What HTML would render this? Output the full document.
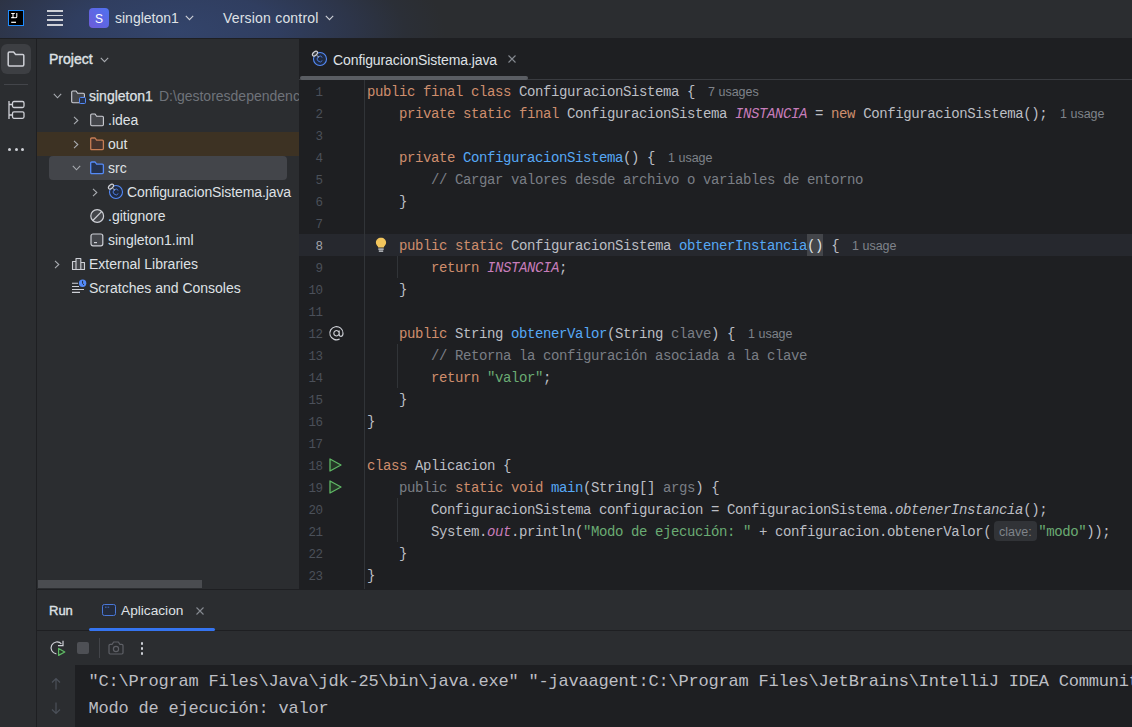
<!DOCTYPE html>
<html><head><meta charset="utf-8">
<style>
*{margin:0;padding:0;box-sizing:border-box}
html,body{width:1132px;height:727px;overflow:hidden;background:#1e1f22}
body{position:relative;font-family:"Liberation Sans",sans-serif;color:#dfe1e5}
.a{position:absolute}
svg{position:absolute;overflow:visible}
/* header */
#hdr{left:0;top:0;width:1132px;height:38px;background:#2b2d30;overflow:hidden}
#hdrgrad{left:0;top:0;width:1132px;height:38px;background:radial-gradient(ellipse 270px 110px at 175px 32px,#33446b 0%,#303e60 38%,#2d3549 66%,#2b2f37 85%,#2b2d30 100%)}
.ui{font-size:14px;white-space:pre;line-height:16px}
/* left strip */
#strip{left:0;top:39px;width:36px;height:688px;background:#2b2d30}
#stripb{left:36px;top:39px;width:1px;height:688px;background:#1e1f22}
#proj{left:37px;top:39px;width:262px;height:551px;background:#2b2d30;overflow:hidden}
#editor{left:299px;top:39px;width:833px;height:551px;background:#1e1f22;overflow:hidden}
.code{font-family:"Liberation Mono",monospace;font-size:14px;letter-spacing:-0.4px;line-height:22px;white-space:pre;color:#bcbec4}
.kw{color:#cf8e6d}
.fn{color:#56a8f5}
.st{color:#c77dbb;font-style:italic}
.str{color:#6aab73}
.cm{color:#7a7e85}
.gr{color:#7a7e85}
.it{font-style:italic}
.hint{font-family:"Liberation Sans",sans-serif;font-size:12.5px;color:#7f838a;letter-spacing:0}
.ln{font-family:"Liberation Mono",monospace;font-size:12.5px;color:#4b5059;text-align:right;width:40px;line-height:22px;letter-spacing:-0.5px}
#run{left:37px;top:590px;width:1095px;height:137px;background:#2b2d30}
.con{font-family:"Liberation Mono",monospace;font-size:17px;letter-spacing:-0.2px;line-height:26px;white-space:pre;color:#bcbec4}
</style></head><body>

<!-- HEADER -->
<div id="hdr" class="a">
  <div id="hdrgrad" class="a"></div>
  <!-- IJ logo -->
  <div class="a" style="left:8px;top:10px;width:16px;height:16px;background:#000;border:1.2px solid #1e8cff"></div>
  <svg style="left:0;top:0" width="30" height="30"><path d="M11.2 13.4 L14.8 13.4 M13 13.4 L13 17.6 M11.2 17.6 L14.8 17.6 M16.8 13 L16.8 16.8 Q16.8 17.6 16 17.6 L15.2 17.6" fill="none" stroke="#fff" stroke-width="1.05"/><path d="M11.2 22.3 L16 22.3" stroke="#fff" stroke-width="1.2"/></svg>
  <!-- hamburger -->
  <div class="a" style="left:47px;top:10.2px;width:16px;height:1.6px;background:#ced0d6"></div>
  <div class="a" style="left:47px;top:14.8px;width:16px;height:1.6px;background:#ced0d6"></div>
  <div class="a" style="left:47px;top:19.4px;width:16px;height:1.6px;background:#ced0d6"></div>
  <div class="a" style="left:47px;top:24px;width:16px;height:1.6px;background:#ced0d6"></div>
  <!-- project badge -->
  <div class="a" style="left:89px;top:8px;width:20px;height:20px;border-radius:4px;background:linear-gradient(45deg,#6d5bd8,#4f72f0)"></div>
  <div class="a ui" style="left:89px;top:10.5px;width:20px;text-align:center;color:#fff;font-size:12px">S</div>
  <div class="a ui" style="left:115px;top:10px;color:#dfe1e5;font-size:14px">singleton1</div>
  <svg style="left:185px;top:15px" width="9" height="6"><path d="M0.8 0.8 L4.5 4.6 L8.2 0.8" fill="none" stroke="#ced0d6" stroke-width="1.1"/></svg>
  <div class="a ui" style="left:223px;top:10px;color:#dfe1e5;font-size:14px;letter-spacing:0.2px">Version control</div>
  <svg style="left:325px;top:15px" width="9" height="6"><path d="M0.8 0.8 L4.5 4.6 L8.2 0.8" fill="none" stroke="#ced0d6" stroke-width="1.1"/></svg>
</div>
<div class="a" style="left:0;top:38px;width:1132px;height:1px;background:#1e1f22"></div>

<!-- LEFT STRIP -->
<div id="strip" class="a"></div>
<div id="stripb" class="a"></div>
<div class="a" style="left:1px;top:44px;width:30px;height:30px;border-radius:6px;background:#3d3f43"></div>
<svg style="left:7px;top:51px" width="18" height="16"><path d="M1.2 2.2 Q1.2 1 2.4 1 L6.6 1 L8.6 3.4 L15.6 3.4 Q16.8 3.4 16.8 4.6 L16.8 13.8 Q16.8 15 15.6 15 L2.4 15 Q1.2 15 1.2 13.8 Z" fill="none" stroke="#ced0d6" stroke-width="1.5" stroke-linejoin="round"/></svg>
<div class="a" style="left:4px;top:84px;width:24px;height:1px;background:#43454a"></div>
<svg style="left:8px;top:100px" width="17" height="20"><path d="M1 1 L1 19 M1 4.5 L4 4.5 M1 15 L4 15" fill="none" stroke="#ced0d6" stroke-width="1.3"/><rect x="4.5" y="1.5" width="11.5" height="6" rx="1.5" fill="none" stroke="#ced0d6" stroke-width="1.3"/><rect x="4.5" y="11.8" width="11.5" height="6.5" rx="1.5" fill="none" stroke="#ced0d6" stroke-width="1.3"/></svg>
<div class="a" style="left:8px;top:148px;width:3px;height:3px;border-radius:50%;background:#ced0d6"></div>
<div class="a" style="left:14.5px;top:148px;width:3px;height:3px;border-radius:50%;background:#ced0d6"></div>
<div class="a" style="left:21px;top:148px;width:3px;height:3px;border-radius:50%;background:#ced0d6"></div>

<!-- PROJECT PANEL -->
<div id="proj" class="a"></div>
<div class="a ui" style="left:49px;top:51px;font-size:14px;-webkit-text-stroke:0.4px #dfe1e5">Project</div>
<svg style="left:100px;top:57px" width="9" height="6"><path d="M0.8 0.8 L4.5 4.6 L8.2 0.8" fill="none" stroke="#a8abb0" stroke-width="1.1"/></svg>
<div class="a" style="left:37px;top:132px;width:262px;height:24px;background:#3d3223"></div>
<div class="a" style="left:49px;top:156px;width:238px;height:24px;border-radius:4px;background:#43454a"></div>
<svg style="left:53px;top:93px" width="9" height="6"><path d="M0.8 0.8 L4.5 4.8 L8.2 0.8" fill="none" stroke="#a8abb0" stroke-width="1.1"/></svg>
<svg style="left:71px;top:90px" width="15" height="13"><path d="M0.7 2.1 Q0.7 1 1.8 1 L5.1 1 L6.6 3.2 L12.3 3.2 Q13.4 3.2 13.4 4.3 L13.4 11.6 Q13.4 12.7 12.3 12.7 L1.8 12.7 Q0.7 12.7 0.7 11.6 Z" fill="#43454a" stroke="#ced0d6" stroke-width="1.1" stroke-linejoin="round"/></svg>
<div class="a" style="left:78.5px;top:97px;width:7.5px;height:7px;border-radius:1.5px;background:#25324d;border:1.3px solid #548af7"></div>
<div class="a ui" style="left:89px;top:88px;font-size:14px;-webkit-text-stroke:0.25px #dfe1e5">singleton1</div>
<div class="a ui" style="left:159px;top:88px;color:#6f737a">D:\gestoresdependencias</div>
<svg style="left:73px;top:116px" width="6" height="9"><path d="M1 0.8 L4.8 4.5 L1 8.2" fill="none" stroke="#a8abb0" stroke-width="1.1"/></svg>
<svg style="left:90px;top:113px" width="15" height="13"><path d="M0.7 2.1 Q0.7 1 1.8 1 L5.1 1 L6.6 3.2 L12.3 3.2 Q13.4 3.2 13.4 4.3 L13.4 11.6 Q13.4 12.7 12.3 12.7 L1.8 12.7 Q0.7 12.7 0.7 11.6 Z" fill="#43454a" stroke="#ced0d6" stroke-width="1.1" stroke-linejoin="round"/></svg>
<div class="a ui" style="left:108px;top:112px;">.idea</div>
<svg style="left:73px;top:140px" width="6" height="9"><path d="M1 0.8 L4.8 4.5 L1 8.2" fill="none" stroke="#a8abb0" stroke-width="1.1"/></svg>
<svg style="left:90px;top:137px" width="15" height="13"><path d="M0.7 2.1 Q0.7 1 1.8 1 L5.1 1 L6.6 3.2 L12.3 3.2 Q13.4 3.2 13.4 4.3 L13.4 11.6 Q13.4 12.7 12.3 12.7 L1.8 12.7 Q0.7 12.7 0.7 11.6 Z" fill="#45322b" stroke="#c77d55" stroke-width="1.3" stroke-linejoin="round"/></svg>
<div class="a ui" style="left:108px;top:136px;">out</div>
<svg style="left:72px;top:165px" width="9" height="6"><path d="M0.8 0.8 L4.5 4.8 L8.2 0.8" fill="none" stroke="#a8abb0" stroke-width="1.1"/></svg>
<svg style="left:90px;top:161px" width="15" height="13"><path d="M0.7 2.1 Q0.7 1 1.8 1 L5.1 1 L6.6 3.2 L12.3 3.2 Q13.4 3.2 13.4 4.3 L13.4 11.6 Q13.4 12.7 12.3 12.7 L1.8 12.7 Q0.7 12.7 0.7 11.6 Z" fill="#25324d" stroke="#548af7" stroke-width="1.3" stroke-linejoin="round"/></svg>
<div class="a ui" style="left:108px;top:160px;">src</div>
<svg style="left:92px;top:188px" width="6" height="9"><path d="M1 0.8 L4.8 4.5 L1 8.2" fill="none" stroke="#a8abb0" stroke-width="1.1"/></svg>
<svg style="left:107px;top:183px" width="17" height="17"><circle cx="9" cy="9" r="6.5" fill="#1f2a40" stroke="#548af7" stroke-width="1.1"/><path d="M11.3 7.4 A2.8 2.8 0 1 0 11.3 10.6" fill="none" stroke="#4a7ae0" stroke-width="1"/><path d="M5.6 5.2 L8 7.4" stroke="#ced0d6" stroke-width="0.9"/><ellipse cx="4" cy="3.6" rx="3" ry="1.8" transform="rotate(-40 4 3.6)" fill="#3a3c40" stroke="#ced0d6" stroke-width="1.1"/></svg>
<div class="a ui" style="left:127px;top:184px;letter-spacing:-0.1px">ConfiguracionSistema.java</div>
<svg style="left:90px;top:209px" width="15" height="15"><circle cx="7.2" cy="7" r="6.4" fill="#43454a" stroke="#ced0d6" stroke-width="1.2"/><path d="M2.8 11.5 L11.6 2.6" stroke="#ced0d6" stroke-width="1.2"/></svg>
<div class="a ui" style="left:108px;top:208px;">.gitignore</div>
<svg style="left:90px;top:233px" width="14" height="14"><rect x="1" y="1" width="11.8" height="11.8" rx="2" fill="#43454a" stroke="#ced0d6" stroke-width="1.2"/><path d="M4 9.6 L7 9.6" stroke="#ced0d6" stroke-width="1.2"/></svg>
<div class="a ui" style="left:108px;top:232px;">singleton1.iml</div>
<svg style="left:54px;top:260px" width="6" height="9"><path d="M1 0.8 L4.8 4.5 L1 8.2" fill="none" stroke="#a8abb0" stroke-width="1.1"/></svg>
<svg style="left:66px;top:252px" width="24" height="20"><path d="M6.5 9.5 L10 9.5 L10 17.5 L6.5 17.5 Z M10 6.5 L14.8 6.5 L14.8 17.5 L10 17.5 Z M14.8 10.5 L18.5 10.5 L18.5 17.5 L14.8 17.5 Z" fill="#43454a" stroke="#ced0d6" stroke-width="1.1" stroke-linejoin="round"/></svg>
<div class="a ui" style="left:89px;top:256px;">External Libraries</div>
<svg style="left:66px;top:276px" width="24" height="20"><path d="M6 7.3 L12 7.3 M6 10.5 L13 10.5 M6 13.5 L18 13.5 M6 16.4 L14 16.4" stroke="#ced0d6" stroke-width="1.1"/><circle cx="16.6" cy="7.3" r="3.7" fill="#548af7"/><path d="M16.6 4.8 L16.6 7.5 L18 8.9" stroke="#1e1f22" stroke-width="0.9" fill="none"/></svg>
<div class="a ui" style="left:89px;top:280px;">Scratches and Consoles</div>
<div class="a" style="left:38px;top:580px;width:164px;height:8px;background:#4a4c50"></div>

<!-- EDITOR -->
<div id="editor" class="a"></div>
<svg style="left:311px;top:50px" width="18" height="18"><circle cx="9" cy="9" r="6.5" fill="#1f2a40" stroke="#548af7" stroke-width="1.1"/><path d="M11.3 7.4 A2.8 2.8 0 1 0 11.3 10.6" fill="none" stroke="#4a7ae0" stroke-width="1"/><path d="M5.6 5.2 L8 7.4" stroke="#ced0d6" stroke-width="0.9"/><ellipse cx="4" cy="3.6" rx="3" ry="1.8" transform="rotate(-40 4 3.6)" fill="#3a3c40" stroke="#ced0d6" stroke-width="1.1"/></svg>
<div class="a ui" style="left:333px;top:52px;letter-spacing:-0.1px">ConfiguracionSistema.java</div>
<svg style="left:508px;top:55px" width="8" height="8"><path d="M0.5 0.5 L7.5 7.5 M7.5 0.5 L0.5 7.5" stroke="#868a91" stroke-width="1.1"/></svg>
<div class="a" style="left:299px;top:79px;width:833px;height:1px;background:#393b40"></div>
<div class="a" style="left:300px;top:76px;width:228px;height:4px;border-radius:2px;background:#5a5d63"></div>
<div class="a" style="left:299px;top:234px;width:833px;height:22px;background:#26282e"></div>
<div class="a" style="left:807px;top:234px;width:16px;height:22px;background:#43454a"></div>
<div class="a" style="left:364px;top:80px;width:1px;height:510px;background:#313438"></div>
<div class="a" style="left:397px;top:256px;width:1px;height:22px;background:#313438"></div>
<div class="a" style="left:397px;top:344px;width:1px;height:44px;background:#313438"></div>
<div class="a" style="left:397px;top:498px;width:1px;height:44px;background:#313438"></div>
<div class="a ln" style="left:282.5px;top:82px;color:#4b5059">1</div>
<div class="a ln" style="left:282.5px;top:104px;color:#4b5059">2</div>
<div class="a ln" style="left:282.5px;top:126px;color:#4b5059">3</div>
<div class="a ln" style="left:282.5px;top:148px;color:#4b5059">4</div>
<div class="a ln" style="left:282.5px;top:170px;color:#4b5059">5</div>
<div class="a ln" style="left:282.5px;top:192px;color:#4b5059">6</div>
<div class="a ln" style="left:282.5px;top:214px;color:#4b5059">7</div>
<div class="a ln" style="left:282.5px;top:236px;color:#a1a3ab">8</div>
<div class="a ln" style="left:282.5px;top:258px;color:#4b5059">9</div>
<div class="a ln" style="left:282.5px;top:280px;color:#4b5059">10</div>
<div class="a ln" style="left:282.5px;top:302px;color:#4b5059">11</div>
<div class="a ln" style="left:282.5px;top:324px;color:#4b5059">12</div>
<div class="a ln" style="left:282.5px;top:346px;color:#4b5059">13</div>
<div class="a ln" style="left:282.5px;top:368px;color:#4b5059">14</div>
<div class="a ln" style="left:282.5px;top:390px;color:#4b5059">15</div>
<div class="a ln" style="left:282.5px;top:412px;color:#4b5059">16</div>
<div class="a ln" style="left:282.5px;top:434px;color:#4b5059">17</div>
<div class="a ln" style="left:282.5px;top:456px;color:#4b5059">18</div>
<div class="a ln" style="left:282.5px;top:478px;color:#4b5059">19</div>
<div class="a ln" style="left:282.5px;top:500px;color:#4b5059">20</div>
<div class="a ln" style="left:282.5px;top:522px;color:#4b5059">21</div>
<div class="a ln" style="left:282.5px;top:544px;color:#4b5059">22</div>
<div class="a ln" style="left:282.5px;top:566px;color:#4b5059">23</div>
<div class="a code" style="left:367px;top:81px"><span class="kw">public final class</span> ConfiguracionSistema {</div>
<div class="a code" style="left:367px;top:103px">    <span class="kw">private static final</span> ConfiguracionSistema <span class="st">INSTANCIA</span> = <span class="kw">new</span> ConfiguracionSistema();</div>
<div class="a code" style="left:367px;top:147px">    <span class="kw">private</span> <span class="fn">ConfiguracionSistema</span>() {</div>
<div class="a code" style="left:367px;top:169px">        <span class="cm">// Cargar valores desde archivo o variables de entorno</span></div>
<div class="a code" style="left:367px;top:191px">    }</div>
<div class="a code" style="left:367px;top:235px">    <span class="kw">public static</span> ConfiguracionSistema <span class="fn">obtenerInstancia</span><span style="color:#dfe1e5">()</span> {</div>
<div class="a code" style="left:367px;top:257px">        <span class="kw">return</span> <span class="st">INSTANCIA</span>;</div>
<div class="a code" style="left:367px;top:279px">    }</div>
<div class="a code" style="left:367px;top:323px">    <span class="kw">public</span> String <span class="fn">obtenerValor</span>(String <span class="gr">clave</span>) {</div>
<div class="a code" style="left:367px;top:345px">        <span class="cm">// Retorna la configuración asociada a la clave</span></div>
<div class="a code" style="left:367px;top:367px">        <span class="kw">return</span> <span class="str">"valor"</span>;</div>
<div class="a code" style="left:367px;top:389px">    }</div>
<div class="a code" style="left:367px;top:411px">}</div>
<div class="a code" style="left:367px;top:455px"><span class="kw">class</span> Aplicacion {</div>
<div class="a code" style="left:367px;top:477px">    <span class="gr">public</span> <span class="kw">static void</span> <span class="fn">main</span>(String[] <span class="gr">args</span>) {</div>
<div class="a code" style="left:367px;top:499px">        ConfiguracionSistema configuracion = ConfiguracionSistema.<span class="it">obtenerInstancia</span>();</div>
<div class="a code" style="left:367px;top:521px">        System.<span class="st">out</span>.println(<span class="str">"Modo de ejecución: "</span> + configuracion.obtenerValor(<span class="a" style="display:inline-block;position:relative;width:47px;height:1px"></span><span class="str">"modo"</span>));</div>
<div class="a code" style="left:367px;top:543px">    }</div>
<div class="a code" style="left:367px;top:565px">}</div>
<div class="a hint" style="left:708px;top:85px;line-height:14px">7 usages</div>
<div class="a hint" style="left:1060px;top:107px;line-height:14px">1 usage</div>
<div class="a hint" style="left:668px;top:151px;line-height:14px">1 usage</div>
<div class="a hint" style="left:852px;top:239px;line-height:14px">1 usage</div>
<div class="a hint" style="left:748px;top:327px;line-height:14px">1 usage</div>
<div class="a" style="left:994px;top:521px;width:43px;height:20px;border-radius:4px;background:#313337"></div>
<div class="a hint" style="left:999px;top:525px;line-height:14px;color:#7f838a">clave:</div>
<svg style="left:375px;top:237px" width="12" height="16"><path d="M6 0.8 C3 0.8 0.9 2.9 0.9 5.6 C0.9 7.5 2 8.6 2.9 9.5 L3.2 10.4 L8.8 10.4 L9.1 9.5 C10 8.6 11.1 7.5 11.1 5.6 C11.1 2.9 9 0.8 6 0.8 Z" fill="#f2c55c"/><rect x="3.3" y="11.5" width="5.4" height="1.2" fill="#dfe1e5"/><rect x="3.8" y="13.5" width="4.4" height="1.2" fill="#dfe1e5"/></svg>
<svg style="left:329px;top:326px" width="15" height="15"><path d="M10.2 7.3 A2.7 2.7 0 1 1 10.2 7.2 M10.2 4.6 L10.2 8.6 Q10.2 10.4 11.8 10.4 Q14 10.4 14 7.2 A6.6 6.6 0 1 0 10.6 13" fill="none" stroke="#ced0d6" stroke-width="1.15"/></svg>
<svg style="left:329px;top:458px" width="13" height="14"><path d="M1 1 L12 7 L1 13 Z" fill="#253627" stroke="#5fb865" stroke-width="1.3" stroke-linejoin="round"/></svg>
<svg style="left:329px;top:480px" width="13" height="14"><path d="M1 1 L12 7 L1 13 Z" fill="#253627" stroke="#5fb865" stroke-width="1.3" stroke-linejoin="round"/></svg>

<!-- RUN PANEL -->
<div class="a" style="left:37px;top:589px;width:1095px;height:1px;background:#1e1f22"></div>
<div id="run" class="a"></div>
<div class="a ui" style="left:49px;top:603px;font-size:13px;-webkit-text-stroke:0.35px #dfe1e5">Run</div>
<svg style="left:102px;top:604px" width="16" height="14"><rect x="0.5" y="0.5" width="13" height="11" rx="1.8" fill="#232b3c" stroke="#4a78d8" stroke-width="1"/><path d="M3 3.2 L4.6 3.2 M5.6 3.2 L7.2 3.2" stroke="#4a78d8" stroke-width="0.9"/></svg>
<div class="a ui" style="left:121px;top:603px;font-size:13.7px">Aplicacion</div>
<svg style="left:196px;top:607px" width="8" height="8"><path d="M0.5 0.5 L7.5 7.5 M7.5 0.5 L0.5 7.5" stroke="#868a91" stroke-width="1.1"/></svg>
<div class="a" style="left:37px;top:630px;width:1095px;height:1px;background:#1e1f22"></div>
<div class="a" style="left:89px;top:628px;width:126px;height:3px;border-radius:1.5px;background:#3574f0"></div>
<svg style="left:44px;top:634px" width="24" height="24"><path d="M12.4 19.9 A6 6 0 1 1 17.4 9.8" fill="none" stroke="#ced0d6" stroke-width="1.2"/><path d="M14 11.6 L19 11.6 L19 6.8" fill="none" stroke="#ced0d6" stroke-width="1.2"/><path d="M14.6 14.4 L20.8 18 L14.6 21.4 Z" fill="#253627" stroke="#5fb865" stroke-width="1.2" stroke-linejoin="round"/></svg>
<div class="a" style="left:77px;top:642px;width:12px;height:12px;border-radius:2px;background:#4e5055"></div>
<div class="a" style="left:99px;top:638px;width:1px;height:20px;background:#43454a"></div>
<svg style="left:108px;top:641px" width="16" height="14"><path d="M1 4.5 Q1 3.3 2.2 3.3 L4.2 3.3 L5.6 1 L10.4 1 L11.8 3.3 L13.8 3.3 Q15 3.3 15 4.5 L15 11.8 Q15 13 13.8 13 L2.2 13 Q1 13 1 11.8 Z" fill="none" stroke="#5e6066" stroke-width="1.2" stroke-linejoin="round"/><circle cx="8" cy="8" r="2.6" fill="none" stroke="#5e6066" stroke-width="1.2"/></svg>
<div class="a" style="left:140.5px;top:642px;width:2.6px;height:2.6px;border-radius:50%;background:#ced0d6"></div>
<div class="a" style="left:140.5px;top:647px;width:2.6px;height:2.6px;border-radius:50%;background:#ced0d6"></div>
<div class="a" style="left:140.5px;top:652px;width:2.6px;height:2.6px;border-radius:50%;background:#ced0d6"></div>
<div class="a" style="left:75px;top:665px;width:1057px;height:62px;background:#1e1f22"></div>
<svg style="left:51px;top:677px" width="10" height="13"><path d="M5 12.5 L5 1.5 M1 5.5 L5 1.5 L9 5.5" fill="none" stroke="#4b5059" stroke-width="1.2"/></svg>
<svg style="left:51px;top:702px" width="10" height="13"><path d="M5 0.5 L5 11.5 M1 7.5 L5 11.5 L9 7.5" fill="none" stroke="#4b5059" stroke-width="1.2"/></svg>
<div class="a con" style="left:88.5px;top:669px">"C:\Program Files\Java\jdk-25\bin\java.exe" "-javaagent:C:\Program Files\JetBrains\IntelliJ IDEA Community Edition</div>
<div class="a con" style="left:88.5px;top:696px">Modo de ejecución: valor</div>

</body></html>
